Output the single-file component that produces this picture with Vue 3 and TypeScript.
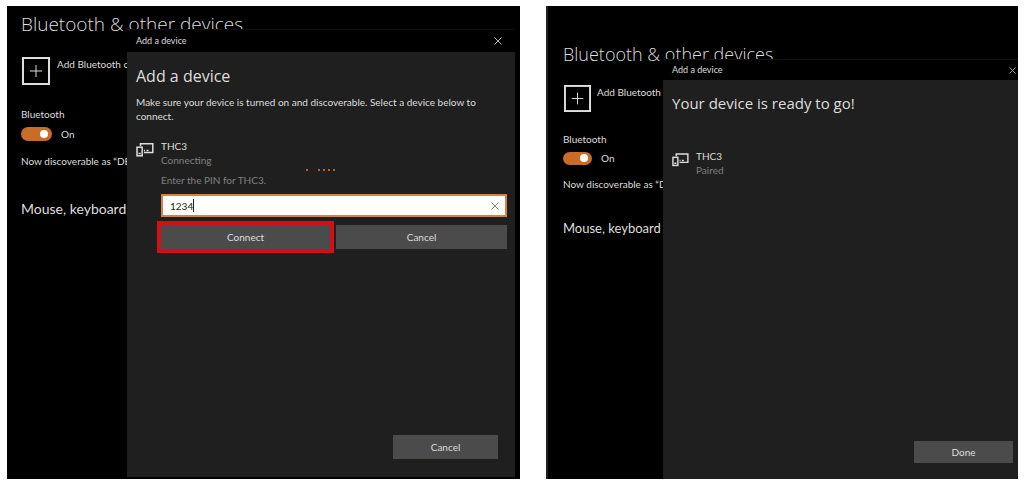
<script setup lang="ts">
import { ref } from 'vue'

interface Step {
  id: string
  heading: string
  status: string
  pairing: boolean
  action: string
}

const steps: Step[] = [
  { id: 'connect', heading: 'Add a device', status: 'Connecting', pairing: true, action: 'Cancel' },
  { id: 'ready', heading: 'Your device is ready to go!', status: 'Paired', pairing: false, action: 'Done' },
]
const pin = ref('1234')
const enabled = ref(true)
</script>

<template>
  <main class="board">
    <section v-for="step in steps" :key="step.id" class="screen" :class="step.id">
      <div class="settings">
        <h1 class="title">Bluetooth &amp; other devices</h1>
        <button class="add" type="button">
          <svg class="plus" viewBox="0 0 28 28" aria-hidden="true">
            <rect x="1" y="1" width="26" height="26" />
            <path d="M14 8v12M8 14h12" />
          </svg>
          <span class="clip">Add Bluetooth o</span>
        </button>
        <p class="label">Bluetooth</p>
        <label class="switch">
          <input v-model="enabled" type="checkbox" role="switch" aria-label="Bluetooth" />
          <span>{{ enabled ? 'On' : 'Off' }}</span>
        </label>
        <p class="note clip">Now discoverable as “DE</p>
        <h2 class="group clip">Mouse, keyboard</h2>
      </div>

      <div class="dialog" role="dialog" :aria-label="step.heading">
        <header class="bar">
          <span>Add a device</span>
          <button class="close" type="button" aria-label="Close">
            <svg viewBox="0 0 8 8" aria-hidden="true"><path d="M.5 .5l7 7M7.5 .5l-7 7" /></svg>
          </button>
        </header>
        <div class="body">
          <h2 class="heading">{{ step.heading }}</h2>
          <p v-if="step.pairing" class="hint">
            Make sure your device is turned on and discoverable. Select a device below to connect.
          </p>
          <div class="device">
            <svg class="glyph" viewBox="0 0 18 15" aria-hidden="true">
              <path d="M4.500 4V1.700h12.300v8.800H8" />
              <rect x="1" y="5.200" width="5.200" height="8.600" />
              <path d="M2.500 11.500h2.200M8 8.500h1M10.500 8.500h2" />
            </svg>
            <div class="info">
              <p class="name">THC3</p>
              <p class="status">{{ step.status }}</p>
              <form v-if="step.pairing" class="pair" @submit.prevent>
                <div class="dots" aria-hidden="true"><i /><i /><i /><i /><i /></div>
                <label class="prompt" for="pin">Enter the PIN for THC3.</label>
                <div class="field">
                  <input id="pin" v-model="pin" type="text" autocomplete="off" />
                  <span class="caret" aria-hidden="true" />
                  <button class="clear" type="button" aria-label="Clear" @click="pin = ''">
                    <svg viewBox="0 0 8 8" aria-hidden="true"><path d="M.5 .5l7 7M7.5 .5l-7 7" /></svg>
                  </button>
                </div>
                <div class="choices">
                  <button class="btn marked" type="submit">Connect</button>
                  <button class="btn" type="button">Cancel</button>
                </div>
              </form>
            </div>
          </div>
          <footer class="foot">
            <button class="btn" type="button">{{ step.action }}</button>
          </footer>
        </div>
      </div>
    </section>
  </main>
</template>

<style>
body {
  margin: 0;
  background: #fff;
}
</style>

<style scoped>
* {
  box-sizing: border-box;
}
h1, h2, p {
  margin: 0;
  font-weight: 400;
}
button {
  border: 0;
  padding: 0;
  background: none;
  color: inherit;
  font: inherit;
}
svg {
  display: block;
  fill: none;
  stroke: currentColor;
}
.board {
  display: grid;
  grid-template-columns: 513fr 472fr;
  gap: 26px;
  min-height: 100vh;
  padding: 6px 7px 13px;
  font-family: Lato, 'Open Sans', sans-serif;
  font-size: 10px;
  line-height: 14px;
  color: #dedede;
}
.screen {
  position: relative;
  overflow: hidden;
  background: #000;
}
.settings {
  display: flex;
  flex-direction: column;
  align-items: flex-start;
  width: 120px;
  padding: 4px 0 0 14px;
  white-space: nowrap;
}
.clip {
  max-width: 100%;
  min-width: 0;
  overflow: hidden;
}
.title {
  font-family: 'Open Sans', sans-serif;
  font-size: 19px;
  line-height: 28px;
  font-weight: 300;
}
.add {
  display: flex;
  gap: 7px;
  max-width: 100%;
  margin-top: 19px;
  padding-left: 1px;
}
.plus {
  flex: none;
  width: 28px;
  height: 28px;
  stroke-width: 2;
}
.plus path {
  stroke-width: 1;
}
.label {
  margin-top: 22px;
}
.switch {
  display: flex;
  align-items: center;
  gap: 9px;
  margin-top: 6px;
}
.switch input {
  appearance: none;
  display: flex;
  align-items: center;
  justify-content: flex-end;
  width: 31px;
  height: 14px;
  margin: 0;
  padding: 0 4px;
  border-radius: 7px;
  background: #c96c28;
}
.switch input::before {
  content: '';
  width: 8px;
  height: 8px;
  border-radius: 50%;
  background: #fff;
}
.note {
  margin-top: 13px;
}
.group {
  margin-top: 31px;
  font-size: 14px;
  line-height: 20px;
}
.dialog {
  position: absolute;
  inset: 23px 5px 2px 120px;
  display: flex;
  flex-direction: column;
  background: #1f1f1f;
}
.bar {
  display: flex;
  align-items: center;
  justify-content: space-between;
  height: 23px;
  padding: 0 13px 0 9px;
  border-top: 1px solid #111;
  background: #000;
  font-size: 9px;
}
.close,
.clear {
  width: 8px;
  height: 8px;
  color: #b5b5b5;
}
.body {
  flex: 1;
  display: flex;
  flex-direction: column;
  padding: 12px 8px 18px 9px;
}
.heading {
  font-family: 'Open Sans', sans-serif;
  font-size: 16px;
  line-height: 24px;
}
.hint {
  margin-top: 7px;
  padding-right: 20px;
}
.device {
  display: flex;
  gap: 7px;
  margin-top: 16px;
}
.glyph {
  flex: none;
  width: 18px;
  height: 15px;
  margin-top: 3px;
  stroke-width: 1.5;
}
.info {
  flex: 1;
}
.status,
.prompt {
  color: #808080;
}
.pair {
  display: flex;
  flex-direction: column;
}
.dots {
  display: flex;
  gap: 3px;
  height: 6px;
  align-items: center;
  justify-content: center;
  padding-right: 28px;
}
.dots i {
  width: 2px;
  height: 2px;
  background: #b8651f;
}
.dots i:first-child {
  margin-right: 7px;
}
.field {
  position: relative;
  margin-top: 7px;
}
.field input {
  display: block;
  width: 100%;
  height: 23px;
  padding: 0 24px 0 7px;
  border: 2px solid #d38343;
  border-radius: 0;
  outline: 0;
  background: #fffffb;
  color: #222;
  font: inherit;
}
.caret {
  position: absolute;
  left: 32px;
  top: 5px;
  width: 1px;
  height: 13px;
  background: #222;
}
.clear {
  position: absolute;
  right: 8px;
  top: 8px;
  color: #888;
}
.choices {
  display: grid;
  grid-template-columns: 169fr 171fr;
  gap: 6px;
  margin-top: 8px;
}
.btn {
  height: 24px;
  background: #4b4b4b;
}
.marked {
  outline: 4px solid #d20f14;
}
.foot {
  display: flex;
  justify-content: flex-end;
  margin-top: auto;
  padding-right: 9px;
}
.foot .btn {
  width: 105px;
}

.ready {
  border-left: 2px solid #1f2020;
}
.ready .settings {
  width: 115px;
  padding: 34px 0 0 15px;
}
.ready .title {
  font-size: 18px;
}
.ready .add {
  gap: 6px;
  margin-top: 17px;
}
.ready .plus {
  width: 27px;
  height: 27px;
}
.ready .label {
  margin-top: 20px;
}
.ready .switch {
  margin-top: 5px;
}
.ready .switch input {
  width: 29px;
  height: 13px;
}
.ready .note {
  margin-top: 12px;
}
.ready .group {
  margin-top: 27px;
  font-size: 13px;
}
.ready .dialog {
  inset: 53px 0 0 115px;
}
.ready .bar {
  height: 21px;
  padding: 0 2px 0 9px;
}
.ready .close {
  width: 7px;
  height: 7px;
}
.ready .body {
  padding: 11px 5px 16px 9px;
}
.ready .heading {
  font-size: 15px;
}
.ready .device {
  margin-top: 34px;
}
.ready .glyph {
  width: 17px;
}
.ready .foot {
  padding-right: 0;
}
.ready .foot .btn {
  width: 99px;
  height: 22px;
}
</style>
